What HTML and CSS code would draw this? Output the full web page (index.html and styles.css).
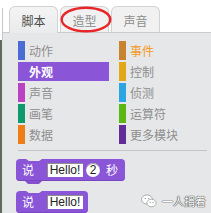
FILE: index.html
```html
<!DOCTYPE html>
<html lang="zh">
<head>
<meta charset="utf-8">
<link rel="stylesheet" href="styles.css">
</head>
<body>
<div class="app">
  <div class="edge"></div>
  <div class="main">
    <div class="tabs">
      <div class="tab active">脚本</div>
      <div class="tab">造型</div>
      <div class="tab">声音</div>
    </div>
    <div class="panel">
      <div class="cats">
        <div class="cat"><span class="bar motion"></span>动作</div>
        <div class="cat hover"><span class="bar events"></span>事件</div>
        <div class="cat sel"><span class="bar looks"></span>外观</div>
        <div class="cat"><span class="bar control"></span>控制</div>
        <div class="cat"><span class="bar sound"></span>声音</div>
        <div class="cat"><span class="bar sensing"></span>侦测</div>
        <div class="cat"><span class="bar pen"></span>画笔</div>
        <div class="cat"><span class="bar operators"></span>运算符</div>
        <div class="cat"><span class="bar data"></span>数据</div>
        <div class="cat"><span class="bar more"></span>更多模块</div>
      </div>
      <div class="sep"></div>
      <div class="blocks">
        <div class="block">
          <span class="word say">说</span>
          <span class="input">Hello!</span>
          <span class="num">2</span>
          <span class="word unit">秒</span>
        </div>
        <div class="block short">
          <span class="word say">说</span>
          <span class="input">Hello!</span>
        </div>
      </div>
    </div>
  </div>
  <svg class="ring" width="52" height="28" viewBox="0 0 52 28">
    <ellipse cx="26" cy="13.5" rx="24.3" ry="11.8" fill="none" stroke="#e8262a" stroke-width="2.4"/>
  </svg>
  <div class="wm">
    <svg class="wm-icon" width="16" height="14" viewBox="0 0 16 14">
      <ellipse cx="6" cy="5.5" rx="5.4" ry="4.6" fill="#fff" stroke="#9a9a9a" stroke-width="0.8"/>
      <ellipse cx="10.5" cy="9" rx="4.6" ry="3.8" fill="#fff" stroke="#9a9a9a" stroke-width="0.8"/>
      <circle cx="4.3" cy="4.4" r="0.7" fill="#9a9a9a"/>
      <circle cx="7.7" cy="4.4" r="0.7" fill="#9a9a9a"/>
      <circle cx="9.2" cy="8.4" r="0.6" fill="#9a9a9a"/>
      <circle cx="12" cy="8.4" r="0.6" fill="#9a9a9a"/>
    </svg>
    <span class="wm-text">一人捐着</span>
  </div>
</div>
</body>
</html>
```

FILE: styles.css
```css
html, body {
  margin: 0;
  width: 211px;
  height: 213px;
  overflow: hidden;
  background: #fff;
}

body {
  font-family: "Noto Sans CJK SC", "Liberation Sans", sans-serif;
}

.app {
  position: relative;
  display: flex;
  height: 213px;
}

.edge {
  flex: none;
  width: 3px;
  background:
    linear-gradient(to right, #5f6b60 0 2px, #e4e4e4 2px 3px) 0 40px / 3px 100% no-repeat,
    linear-gradient(to right, #fff 0 2px, #c8c8c8 2px 3px) 0 8px / 3px 32px no-repeat,
    #fff;
}

.main {
  flex: 1;
  display: flex;
  flex-direction: column;
  min-width: 0;
}

.tabs {
  box-sizing: border-box;
  height: 34px;
  padding: 6px 0 0 6px;
  display: flex;
  gap: 2px;
  border-bottom: 1px solid #cbcbcb;
  background: #fff;
}

.tab {
  box-sizing: border-box;
  width: 49px;
  border: 1px solid #d2d2d2;
  border-bottom: none;
  border-radius: 6px 6px 0 0;
  background: #f1f1f1;
  font-size: 12px;
  color: #8c8c8c;
  display: flex;
  align-items: center;
  justify-content: center;
  padding-top: 1px;
}

.tab.active {
  color: #4a4a4a;
  background: linear-gradient(#f4f4f4, #eaebec);
  margin-bottom: -1px;
}

.panel {
  flex: 1;
  background: #e6e7e8;
  padding: 8px 0 0 15px;
}

.cats {
  display: grid;
  grid-template-columns: 91px 91px;
  column-gap: 10px;
  row-gap: 2px;
}

.cat {
  display: flex;
  align-items: center;
  height: 19px;
  font-size: 12px;
  color: #8e8e8e;
  white-space: nowrap;
}

.cat .bar {
  flex: none;
  width: 7px;
  height: 19px;
  margin-right: 4px;
}

.cat.sel {
  background: #8a55d7;
  color: #fff;
  font-weight: bold;
}

.cat.hover {
  color: #f39a25;
}

.motion { background: #4a6cd4; }
.looks { background: #8a55d7; }
.sound { background: #bb42c3; }
.pen { background: #0e9a6c; }
.data { background: #ee7d16; }
.events { background: #c88330; }
.control { background: #e1a91a; }
.sensing { background: #2ca5e2; }
.operators { background: #5cb712; }
.more { background: #632d99; }

.sep {
  height: 1px;
  background: #c4c4c4;
  margin: 6px 4px 0 0;
}

.blocks {
  margin-left: -2px;
  padding-top: 8px;
  display: flex;
  flex-direction: column;
  align-items: flex-start;
  gap: 10px;
}

.block {
  position: relative;
  display: flex;
  align-items: center;
  height: 22px;
  padding: 0 7px 0 6px;
  background: #8a55d7;
  border-radius: 4px;
  box-shadow: inset 0 -1px 0 #7a47c4;
  color: #fff;
  font-size: 12px;
}

.block.short {
  padding-right: 5px;
}

.block::before {
  content: "";
  position: absolute;
  left: 10px;
  top: 0;
  width: 16px;
  height: 2px;
  background: #e6e7e8;
  clip-path: polygon(0 0, 100% 0, 82% 100%, 18% 100%);
}

.block::after {
  content: "";
  position: absolute;
  left: 9px;
  top: 100%;
  width: 17px;
  height: 3px;
  background: #8450d0;
  clip-path: polygon(0 0, 100% 0, 82% 100%, 18% 100%);
}

.word {
  line-height: 1;
}

.say {
  margin-right: 13px;
}

.input {
  box-sizing: border-box;
  width: 36px;
  height: 14px;
  background: #fff;
  color: #222;
  font-family: "Liberation Sans", sans-serif;
  font-size: 12px;
  display: flex;
  align-items: center;
  justify-content: center;
  box-shadow: inset 1px 1px 0 #8c8c8c;
}

.num {
  box-sizing: border-box;
  width: 14px;
  height: 14px;
  margin-left: 3px;
  border-radius: 50%;
  background: #fff;
  color: #222;
  font-family: "Liberation Sans", sans-serif;
  font-size: 12px;
  display: flex;
  align-items: center;
  justify-content: center;
  box-shadow: inset 0 1px 0 #9a9a9a;
}

.unit {
  margin-left: 6px;
}

.ring {
  position: absolute;
  left: 60px;
  top: 6px;
}

.wm {
  position: absolute;
  right: 5px;
  bottom: 4px;
  display: flex;
  align-items: center;
  gap: 5px;
}

.wm-text {
  font-size: 11px;
  color: #fff;
  text-shadow: 0 0 1px #444, 0 0 1px #444, 0 0 1px #444;
}
```
